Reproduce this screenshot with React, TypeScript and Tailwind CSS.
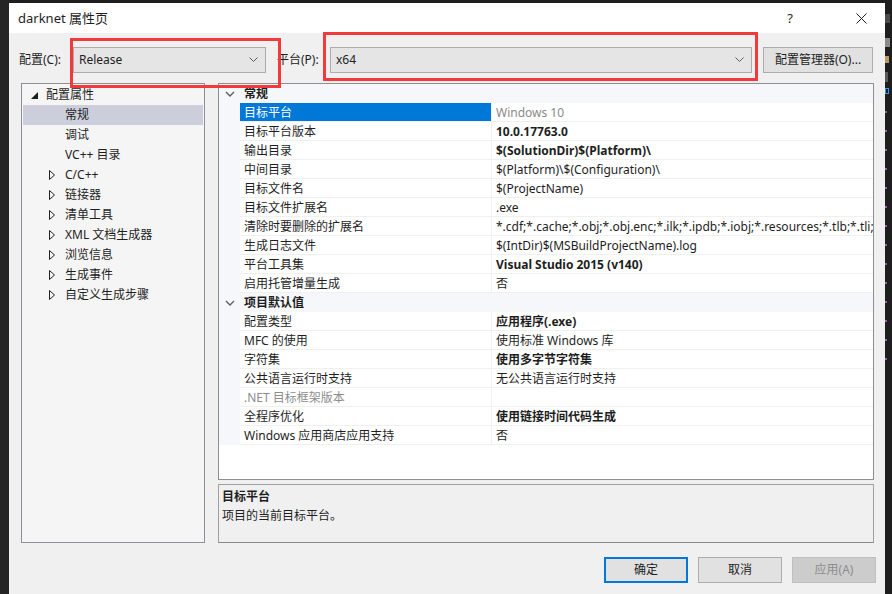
import React from 'react';

interface Row {
  name: string;
  value: string;
  bold?: boolean;
  selected?: boolean;
  valueGray?: boolean;
  nameGray?: boolean;
}

const generalRows: Row[] = [
  { name: '目标平台', value: 'Windows 10', selected: true, valueGray: true },
  { name: '目标平台版本', value: '10.0.17763.0', bold: true },
  { name: '输出目录', value: '$(SolutionDir)$(Platform)\\', bold: true },
  { name: '中间目录', value: '$(Platform)\\$(Configuration)\\' },
  { name: '目标文件名', value: '$(ProjectName)' },
  { name: '目标文件扩展名', value: '.exe' },
  {
    name: '清除时要删除的扩展名',
    value:
      '*.cdf;*.cache;*.obj;*.obj.enc;*.ilk;*.ipdb;*.iobj;*.resources;*.tlb;*.tli;*.tlh;*.tmp;*.rsp;*.pgc;*.pgd;*.meta;*.tlog;*.manifest;*.res;*.pch;*.exp',
  },
  { name: '生成日志文件', value: '$(IntDir)$(MSBuildProjectName).log' },
  { name: '平台工具集', value: 'Visual Studio 2015 (v140)', bold: true },
  { name: '启用托管增量生成', value: '否' },
];

const defaultRows: Row[] = [
  { name: '配置类型', value: '应用程序(.exe)', bold: true },
  { name: 'MFC 的使用', value: '使用标准 Windows 库' },
  { name: '字符集', value: '使用多字节字符集', bold: true },
  { name: '公共语言运行时支持', value: '无公共语言运行时支持' },
  { name: '.NET 目标框架版本', value: '', nameGray: true },
  { name: '全程序优化', value: '使用链接时间代码生成', bold: true },
  { name: 'Windows 应用商店应用支持', value: '否' },
];

const treeItems = [
  { label: '常规', expandable: false, selected: true },
  { label: '调试', expandable: false },
  { label: 'VC++ 目录', expandable: false },
  { label: 'C/C++', expandable: true },
  { label: '链接器', expandable: true },
  { label: '清单工具', expandable: true },
  { label: 'XML 文档生成器', expandable: true },
  { label: '浏览信息', expandable: true },
  { label: '生成事件', expandable: true },
  { label: '自定义生成步骤', expandable: true },
];

function ComboChevron() {
  return (
    <svg width="9" height="6" viewBox="0 0 9 6" className="shrink-0">
      <polyline points="0.5,0.5 4.5,4.5 8.5,0.5" fill="none" stroke="#5a5a5a" strokeWidth="1" />
    </svg>
  );
}

function GroupChevron() {
  return (
    <svg width="10" height="6" viewBox="0 0 10 6">
      <polyline points="1,1 5,5 9,1" fill="none" stroke="#5f5f5f" strokeWidth="1.4" />
    </svg>
  );
}

function Group({ title, rows }: { title: string; rows: Row[] }) {
  return (
    <>
      <div className="flex h-[19px] items-center bg-[#f5f7fa]">
        <div className="flex w-[21px] justify-center pl-[1px]">
          <GroupChevron />
        </div>
        <span className="pl-[4px] pt-[1px] font-bold text-[#1e1e1e]">{title}</span>
      </div>
      {rows.map((r) => (
        <div key={r.name} className="flex h-[19px]">
          <div className="w-[21px] shrink-0 bg-[#f5f7fa]" />
          <div
            className={
              r.selected
                ? 'flex w-[252px] shrink-0 items-center border-b border-r border-[#f0f0f0] bg-[#0078d7] pl-[4px] pt-[1px] text-white'
                : 'flex w-[252px] shrink-0 items-center border-b border-r border-[#f0f0f0] bg-white pl-[4px] pt-[1px] ' +
                  (r.nameGray ? 'text-[#8d8d8d]' : 'text-[#1e1e1e]')
            }
          >
            {r.name}
          </div>
          <div
            className={
              'flex min-w-0 flex-1 items-center overflow-hidden whitespace-nowrap border-b border-[#f0f0f0] bg-white pl-[4px] pt-[1px] ' +
              (r.bold ? 'font-bold ' : '') +
              (r.valueGray ? 'text-[#8a8a8a]' : 'text-[#1e1e1e]')
            }
          >
            {r.value}
          </div>
        </div>
      ))}
    </>
  );
}

export default function App() {
  return (
    <div className="relative flex h-[594px] w-[892px] overflow-hidden bg-[#1e1e1e] text-[12px] leading-none font-['Noto_Sans','Noto_Sans_CJK_SC',sans-serif] text-[#1e1e1e]">
      <div className="w-[9px] shrink-0 bg-[#252526]" />

      {/* dialog */}
      <div className="mt-[3px] flex w-[876px] shrink-0 flex-col bg-[#f0f0f0]">
        <div className="flex h-[30px] items-center bg-white pl-[9px]">
          <span className="text-[13px]">darknet 属性页</span>
          <span className="ml-auto mr-[63px] text-[13px]">?</span>
          <svg width="11" height="11" viewBox="0 0 11 11" className="mr-[18px]">
            <path d="M0.5 0.5 L10.5 10.5 M10.5 0.5 L0.5 10.5" stroke="#1e1e1e" strokeWidth="1" />
          </svg>
        </div>

        <div className="mt-[13px] flex h-[26px] items-center pl-[10px] pt-[1px]">
          <span className="w-[54px]">配置(C):</span>
          <div className="flex h-[26px] w-[193px] items-center justify-between border border-[#acacac] bg-[#e5e5e5] pl-[5px] pr-[7px]">
            <span>Release</span>
            <ComboChevron />
          </div>
          <span className="ml-[11px] w-[53px]">平台(P):</span>
          <div className="flex h-[26px] w-[422px] items-center justify-between border border-[#acacac] bg-[#e5e5e5] pl-[5px] pr-[7px]">
            <span>x64</span>
            <ComboChevron />
          </div>
          <button className="ml-[11px] h-[26px] w-[110px] border border-[#adadad] bg-[#e1e1e1] text-[12px]">
            配置管理器(O)...
          </button>
        </div>

        <div className="mt-[11px] flex">
          {/* tree */}
          <div className="ml-[12px] h-[460px] w-[184px] border border-[#8e8f96] bg-[#f5f5f5] p-[1px]">
            <div className="flex h-[20px] items-center">
              <svg width="7" height="7" viewBox="0 0 7 7" className="ml-[8px]">
                <polygon points="7,0 7,7 0,7" fill="#1e1e1e" />
              </svg>
              <span className="ml-[8px]">配置属性</span>
            </div>
            {treeItems.map((t) => (
              <div
                key={t.label}
                className={'flex h-[20px] items-center ' + (t.selected ? 'bg-[#cccedb]' : '')}
              >
                <div className="flex w-[42px] justify-end pr-[10px]">
                  {t.expandable && (
                    <svg width="6" height="10" viewBox="0 0 6 10">
                      <polygon points="0.5,0.5 5.5,5 0.5,9.5" fill="none" stroke="#1e1e1e" strokeWidth="1" />
                    </svg>
                  )}
                </div>
                <span>{t.label}</span>
              </div>
            ))}
          </div>

          {/* right side */}
          <div className="ml-[13px] flex w-[656px] flex-col">
            <div className="h-[397px] overflow-hidden border border-[#8e8f96] bg-white">
              <Group title="常规" rows={generalRows} />
              <Group title="项目默认值" rows={defaultRows} />
            </div>
            <div className="mt-[4px] h-[59px] border border-[#a0a0a0] border-b-[#8a8a8a] bg-[#f0f0f0] px-[3px] pt-[6px]">
              <div className="font-bold">目标平台</div>
              <div className="mt-[7px]">项目的当前目标平台。</div>
            </div>
          </div>
        </div>

        <div className="mt-[14px] flex justify-end gap-[10px] pr-[9px]">
          <button className="h-[26px] w-[84px] border-2 border-[#0078d7] bg-[#e1e1e1] text-[12px]">确定</button>
          <button className="h-[26px] w-[84px] border border-[#adadad] bg-[#e1e1e1] text-[12px]">取消</button>
          <button className="h-[26px] w-[84px] border border-[#bfbfbf] bg-[#cccccc] text-[12px] text-[#8c8c8c]">
            应用(A)
          </button>
        </div>
      </div>

      {/* editor behind the dialog, only a sliver is visible */}
      <div className="flex w-[7px] shrink-0 flex-col items-start bg-[#1e1e1e] pt-[14px]">
        <div className="h-[9px] w-[5px] bg-[#4a4a4a]" />
        <div className="mt-[15px] h-[9px] w-[5px] bg-[#8a8a8a]" />
        <div className="mt-[9px] h-[7px] w-[4px] bg-[#b89a5e]" />
        <div className="mt-[9px] h-[10px] w-[3px] bg-[#5a5a5a]" />
        <div className="mt-[6px] h-[6px] w-[4px] border border-[#3794ff]" />
        {Array.from({ length: 14 }).map((_, i) => (
          <div key={i} className="mt-[17px] h-[2px] w-[2px] bg-[#a05ab4]" />
        ))}
      </div>

      {/* red highlight boxes */}
      <div className="absolute left-[70px] top-[38px] h-[50px] w-[211px] border-[3px] border-[#f23a3a]" />
      <div className="absolute left-[323px] top-[32px] h-[49px] w-[435px] border-[3px] border-[#f23a3a]" />
    </div>
  );
}
